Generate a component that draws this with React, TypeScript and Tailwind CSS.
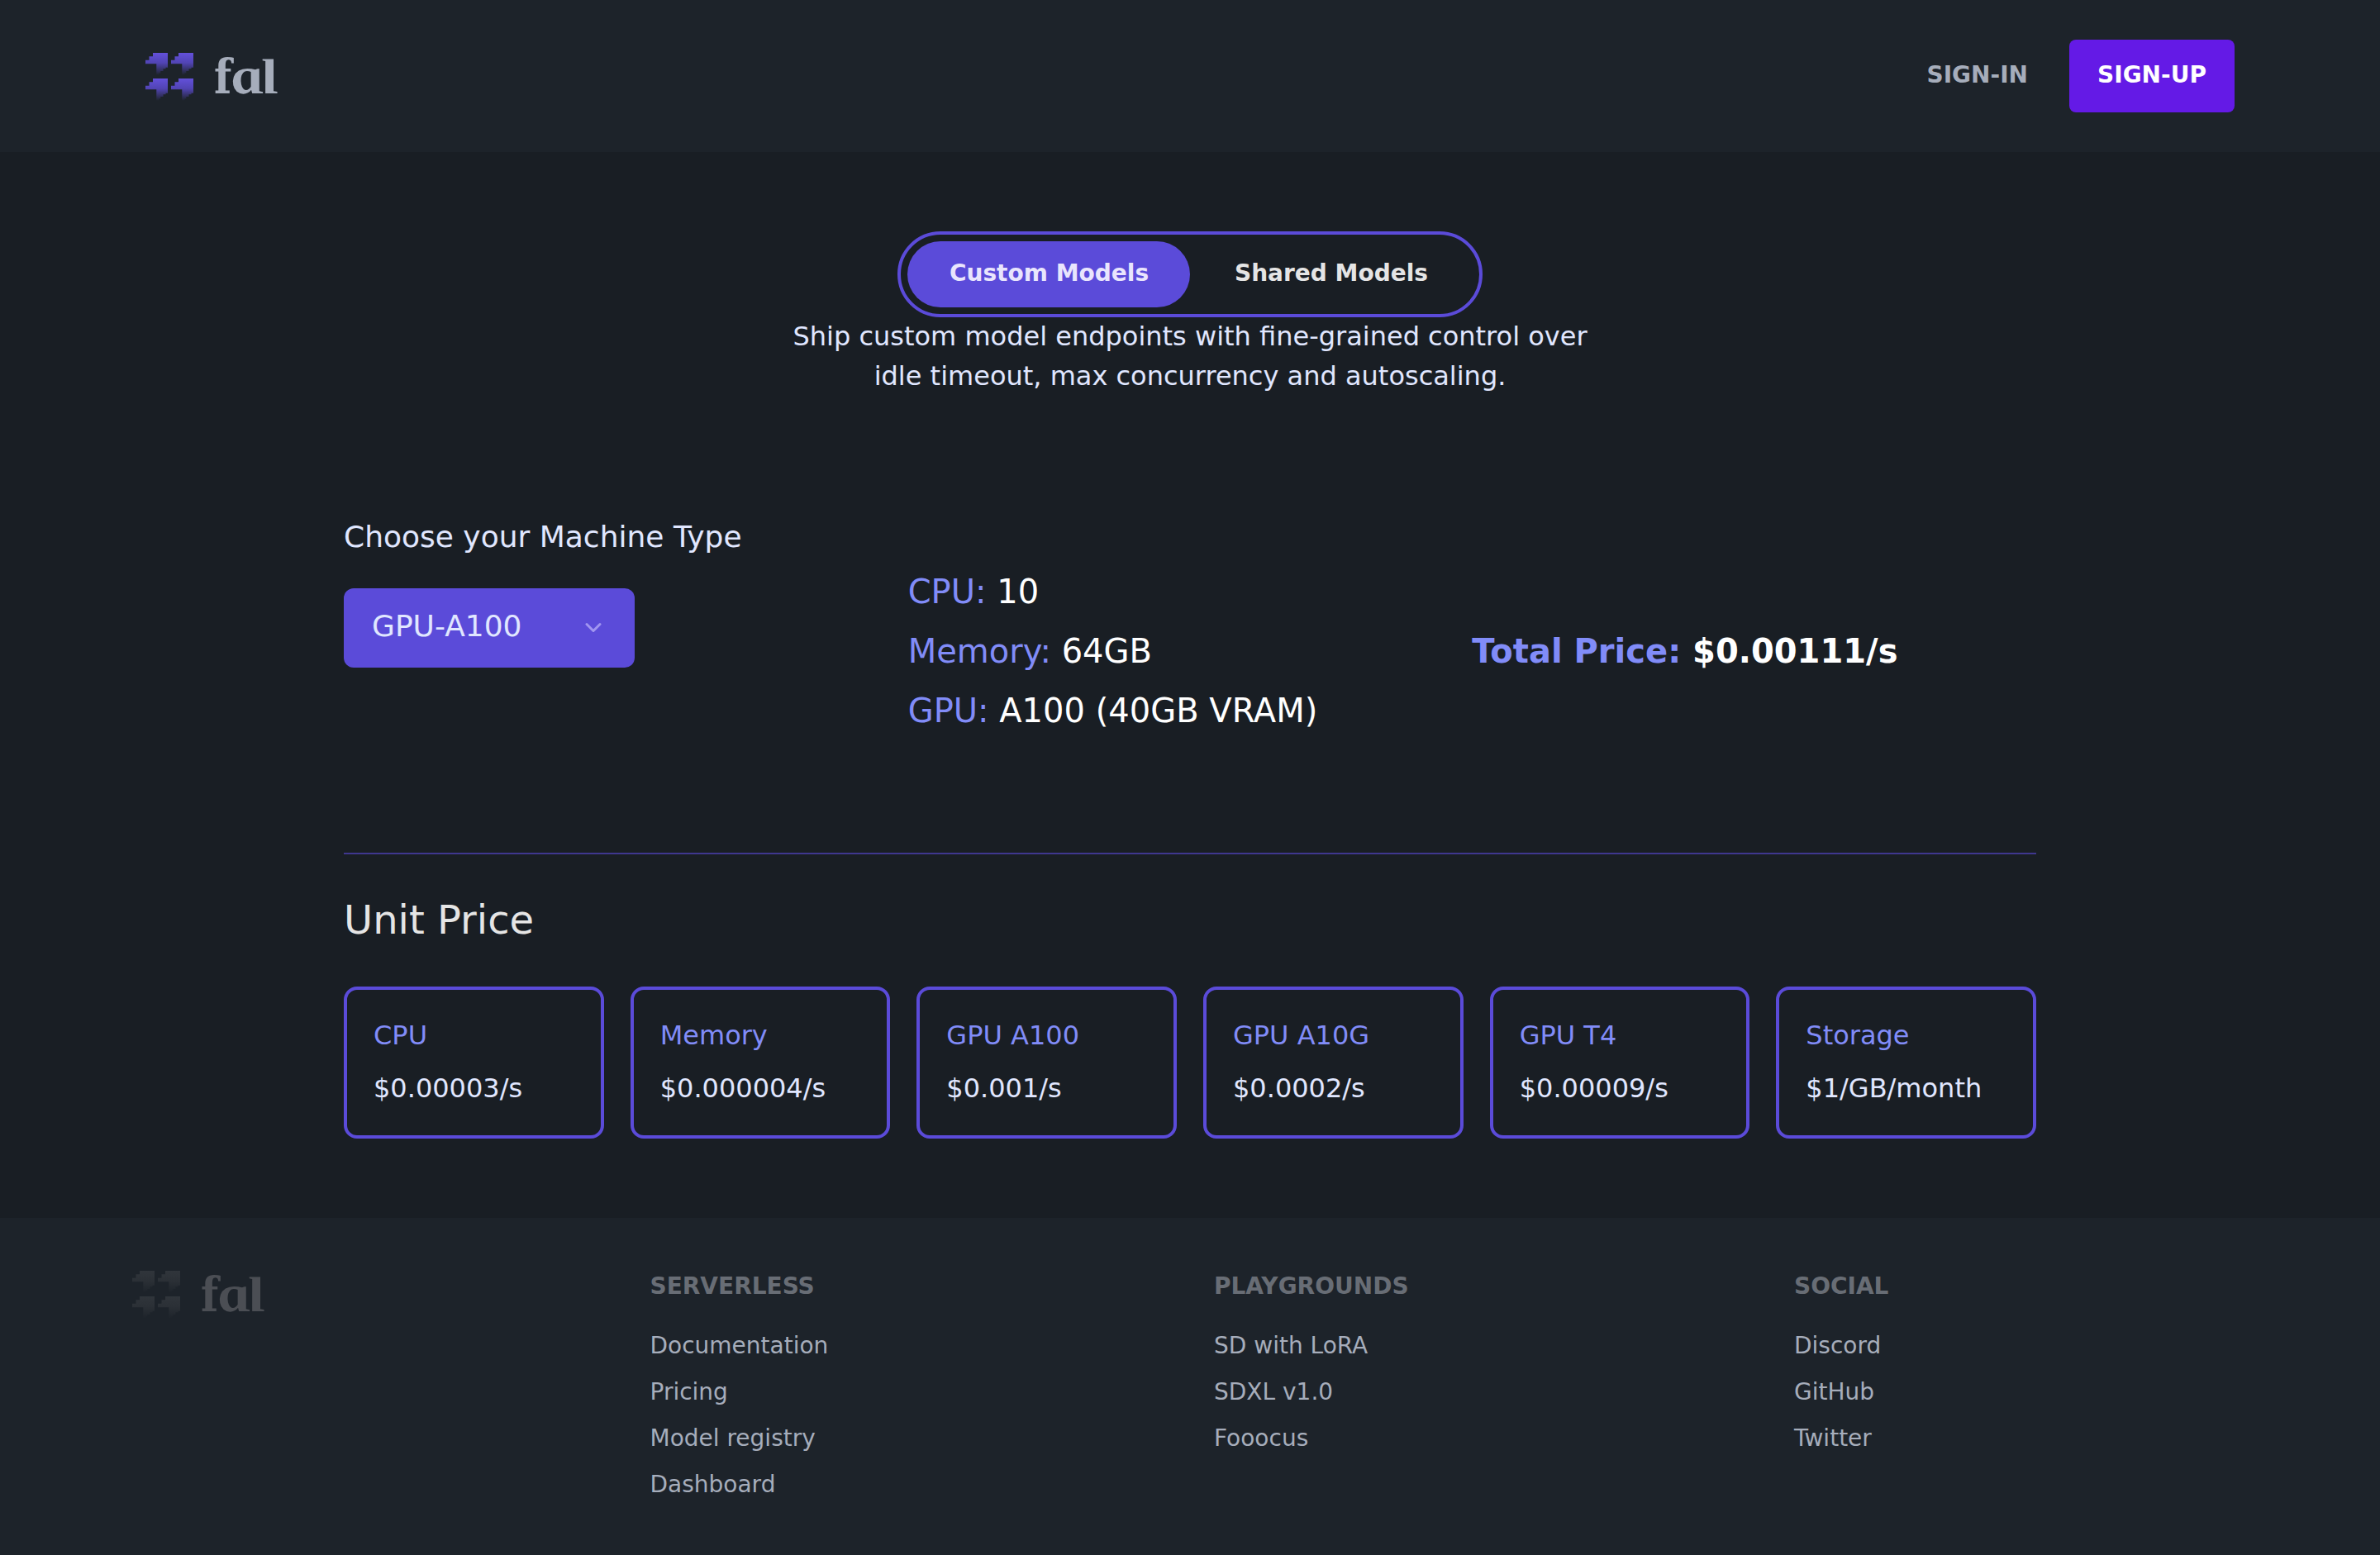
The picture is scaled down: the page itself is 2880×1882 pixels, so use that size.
import React, { useState } from 'react';

const UNIT_PRICES = [
  { name: 'CPU', price: '$0.00003/s' },
  { name: 'Memory', price: '$0.000004/s' },
  { name: 'GPU A100', price: '$0.001/s' },
  { name: 'GPU A10G', price: '$0.0002/s' },
  { name: 'GPU T4', price: '$0.00009/s' },
  { name: 'Storage', price: '$1/GB/month' },
];

const SPECS = [
  { label: 'CPU:', value: '10' },
  { label: 'Memory:', value: '64GB' },
  { label: 'GPU:', value: 'A100 (40GB VRAM)' },
];

const FOOTER_LINKS = [
  { title: 'Serverless', links: ['Documentation', 'Pricing', 'Model registry', 'Dashboard'] },
  { title: 'Playgrounds', links: ['SD with LoRA', 'SDXL v1.0', 'Fooocus'] },
  { title: 'Social', links: ['Discord', 'GitHub', 'Twitter'] },
];

// one stepped quarter of the logo mark, repeated in a 2x2 grid
const STEP = 'M9 0H27V17.7H24.5V19.3H21.5V22H18.3V24.5H16.5V26.5H13.3V13.3H0V8.8H4.5V4.2H9Z';

const Logo: React.FC<{ muted?: boolean }> = ({ muted = false }) => {
  const id = muted ? 'mark-muted' : 'mark';
  return (
    <div className="flex h-14 items-start">
      <svg width="58" height="58" viewBox="0 0 58 58" className="shrink-0">
        <defs>
          <linearGradient id={id} x1="0" y1="0" x2="0" y2="27" gradientUnits="userSpaceOnUse">
            <stop offset="0" stopColor={muted ? '#30353b' : '#6350da'} />
            <stop offset="0.45" stopColor={muted ? '#2b3036' : '#5144b4'} />
            <stop offset="1" stopColor="#1d232a" />
          </linearGradient>
        </defs>
        {[[0, 0], [31, 0], [0, 31], [31, 31]].map(([x, y]) => (
          <path key={`${x}-${y}`} d={STEP} fill={`url(#${id})`} transform={`translate(${x} ${y})`} />
        ))}
      </svg>
      <span
        className={`-mt-0.5 ml-[25px] flex items-baseline leading-[60px] font-bold ${
          muted ? 'text-[#4b4e54]' : 'text-[#a6adbb]'
        }`}
      >
        <span className="inline-block w-5 origin-left scale-x-85 font-['DejaVu_Serif'] text-[58px]">f</span>
        <span className="inline-block w-9 origin-left skew-x-[10deg] scale-x-120 font-['Liberation_Serif'] text-[64px] italic">a</span>
        <span className="inline-block w-5 origin-left skew-x-[10deg] scale-x-125 font-['Liberation_Serif'] text-[60px] italic">l</span>
      </span>
    </div>
  );
};

const App: React.FC = () => {
  const [tab, setTab] = useState<'custom' | 'shared'>('custom');

  return (
    <div className="flex h-[1882px] flex-col bg-[#191e24] font-['DejaVu_Sans',sans-serif] text-[#a6adbb]">
      {/* Header */}
      <header className="h-[184px] bg-[#1d232a] px-44">
        <div className="flex h-full items-center justify-between">
          <Logo />
          <nav className="flex items-center text-[28px] font-bold uppercase">
            <a className="mr-[50px] -mt-0.5">Sign-in</a>
            <a className="flex h-22 w-[200px] justify-center rounded-lg bg-[#641ae6] leading-[86px] text-white">
              Sign-up
            </a>
          </nav>
        </div>
      </header>

      <main className="flex h-[1290px] flex-col pt-24">
        {/* Tab Switcher */}
        <div className="mx-auto flex h-[104px] w-[708px] rounded-full border-4 border-[#5b4bd9] p-2 text-[28px] leading-[76px] font-bold">
          <button
            onClick={() => setTab('custom')}
            className={`h-20 w-[342px] rounded-full pb-0.5 pl-px ${tab === 'custom' ? 'bg-[#5b4bd9] text-[#e9e5fd]' : 'text-[#e5e5e5]'}`}
          >
            Custom Models
          </button>
          <button
            onClick={() => setTab('shared')}
            className={`h-20 w-[342px] rounded-full pb-0.5 ${tab === 'shared' ? 'bg-[#5b4bd9] text-[#e9e5fd]' : 'text-[#e5e5e5]'}`}
          >
            Shared Models
          </button>
        </div>
        <p className="mx-auto -mt-px w-[1024px] text-center text-[32px] leading-[48px] text-indigo-100">
          Ship custom model endpoints with fine-grained control over idle timeout, max concurrency and autoscaling.
        </p>

        {/* Machine */}
        <section className="mx-auto mt-36 grid h-[411px] w-[2048px] grid-cols-3 border-b-2 border-[#3f378f]">
          <div>
            <h3 className="text-[36px] leading-[54px] text-indigo-100">Choose your Machine Type</h3>
            <button className="mt-[35px] flex h-24 w-[352px] items-center justify-between rounded-xl bg-[#5b4bd9] pr-10 pl-[34px] text-[36px] text-indigo-100">
              <span className="-mt-1">GPU-A100</span>
              <svg width="20" height="14" viewBox="0 0 20 14" fill="none" stroke="#a195f0" strokeWidth="3" strokeLinecap="round" strokeLinejoin="round">
                <path d="M2 2.5l8 8 8-8" />
              </svg>
            </button>
          </div>
          <ul className="pt-[57px] text-[40px] leading-[72px] text-white">
            {SPECS.map((s) => (
              <li key={s.label}>
                <span className="text-[#818cf8]">{s.label}</span> {s.value}
              </li>
            ))}
          </ul>
          <p className="pt-[129px] text-[40px] leading-[72px] font-bold text-white">
            <span className="text-[#818cf8]">Total Price:</span> $0.00111/s
          </p>
        </section>

        {/* Unit Prices */}
        <section className="mx-auto w-[2048px] pt-[43px]">
          <h2 className="text-[48px] leading-[72px] text-[#e5e5e5]">Unit Price</h2>
          <div className="mt-[45px] grid grid-cols-6 gap-8">
            {UNIT_PRICES.map((item) => (
              <div key={item.name} className="h-[184px] rounded-2xl border-4 border-[#5b4bd9] px-8 pt-[23px] text-[32px] leading-[64px]">
                <h4 className="text-[#818cf8]">{item.name}</h4>
                <p className="text-indigo-100">{item.price}</p>
              </div>
            ))}
          </div>
        </section>
      </main>

      {/* Footer */}
      <footer className="grid flex-1 grid-cols-[626.5px_682.5px_702px_1fr] bg-[#1d232a] pt-16 pl-40 text-[28px]">
        <Logo muted />
        {FOOTER_LINKS.map((col) => (
          <div key={col.title}>
            <h5 className="mt-px mb-[26px] leading-[36px] font-bold text-[#686d75] uppercase">{col.title}</h5>
            <ul className="leading-[56px]">
              {col.links.map((link) => (
                <li key={link}>{link}</li>
              ))}
            </ul>
          </div>
        ))}
      </footer>
    </div>
  );
};

export default App;
